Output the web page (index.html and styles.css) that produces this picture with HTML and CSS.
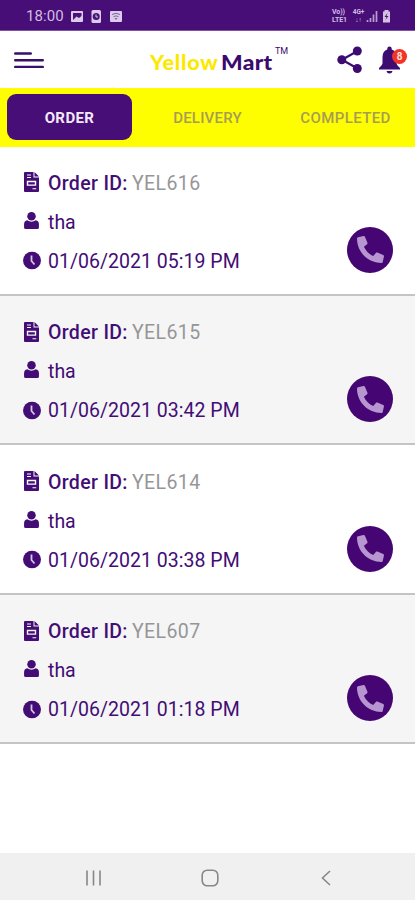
FILE: index.html
```html
<!DOCTYPE html>
<html lang="en">
<head>
<meta charset="utf-8">
<title>Yellow Mart</title>
<link rel="stylesheet" href="styles.css">
</head>
<body>
<svg class="sprite" aria-hidden="true">
  <symbol id="file" viewBox="0 0 15 20">
    <path fill="currentColor" fill-rule="evenodd" d="M1 0H9.500V5.500H15V19Q15 20 14 20H1Q0 20 0 19V1Q0 0 1 0ZM3 2.500V3.500H7V2.500ZM3 5V6H7V5ZM2.800 8.800V13.800H12.200V8.800ZM4.200 10.200H10.800V12.400H4.200ZM8.500 16.300V17.300H12.200V16.300ZM10.500 0L15 4.500H10.500Z"/>
  </symbol>
  <symbol id="person" viewBox="0 0 14 16">
    <circle cx="7" cy="4" r="4" fill="currentColor"/>
    <path fill="currentColor" d="M3 7.800Q7 10.500 11 7.800Q14 8.500 14 11.500V14.500Q14 16 12.500 16H1.500Q0 16 0 14.500V11.500Q0 8.500 3 7.800Z"/>
  </symbol>
  <symbol id="clock" viewBox="0 0 18 18">
    <circle cx="9" cy="9" r="9" fill="currentColor"/>
    <path d="M8.500 4V9.500L11.500 13" fill="none" stroke="#d6c6e3" stroke-width="1.800"/>
  </symbol>
  <symbol id="phone" viewBox="0 0 512 512">
    <path fill="currentColor" d="M493.4 24.6l-104-24c-11.3-2.6-22.9 3.300-27.5 13.900l-48 112c-4.200 9.800-1.400 21.300 6.900 28l60.600 49.600c-36 76.700-98.900 140.500-177.200 177.200l-49.600-60.600c-6.800-8.300-18.200-11.100-28-6.900l-112 48C3.900 366.500-2 378.100.6 389.400l24 104C27.100 504.200 36.700 512 48 512c256.100 0 464-207.500 464-464 0-11.200-7.700-20.900-18.600-23.400z" transform="matrix(-1 0 0 1 512 0)"/>
  </symbol>
</svg>
<div class="app">
  <div class="status">
    <span class="time">18:00</span>
    <svg class="notices" width="53" height="13" viewBox="0 0 53 13">
      <g fill="#dccbea"><rect x="1" y="1" width="12" height="11" rx="1"/><rect x="21.500" y="0" width="9.500" height="13" rx="1.500"/><rect x="40" y="1" width="12" height="11" rx="1"/></g>
      <path d="M3 3H11.500V6L9 8L6.500 6.500L3 10Z" fill="#4a1379"/>
      <circle cx="26.200" cy="6.500" r="3.500" fill="#4a1379"/><path d="M26 4.500V7H28" fill="none" stroke="#dccbea"/>
      <path d="M42 4.500Q46 2 50 4.500M43.500 6.700Q46 5 48.500 6.700" fill="none" stroke="#81619d"/><path d="M44.500 8H47.500L46 10Z" fill="#81619d"/>
    </svg>
    <div class="network"><span>Vo))</span><span>LTE1</span></div>
    <div class="network data"><span>4G+</span><span>↓↑</span></div>
    <svg class="signal" width="25" height="13" viewBox="0 0 25 13">
      <path d="M1.500 12V10M4.500 12V8M7.500 12V4.500M10.500 12V1" stroke="#b79ccc" stroke-width="1.700"/>
      <path d="M17 1.500H18.500V0H22.500V1.500H24V12.500H17Z" fill="#d5c2e3"/><path d="M21.500 3L18.500 7H20.500L19.500 10L22.500 6H20.500Z" fill="#4a1379"/>
    </svg>
  </div>
  <header class="header">
    <svg class="menu" width="30" height="17" viewBox="0 0 30 17"><path d="M1.200 1.500H16.800M1.200 8.200H28.800M1.200 14.900H28.800" stroke="#38106b" stroke-width="2.400" stroke-linecap="round"/></svg>
    <div class="logo"><span class="yellow">Yellow</span><span class="mart">Mart</span><span class="tm">TM</span></div>
    <svg class="share" width="26" height="28" viewBox="0 0 26 28"><path d="M20.500 5L5 13.700L20.500 22.500" fill="none" stroke="#3e0c70" stroke-width="2.200"/><g fill="#3e0c70"><circle cx="20.300" cy="5" r="4.500"/><circle cx="4.800" cy="13.700" r="4.500"/><circle cx="20.300" cy="22.500" r="4.500"/></g></svg>
    <div class="bell"><svg width="23" height="28" viewBox="0 0 23 28"><path fill="#3e0c70" d="M9.300 2.500Q9.300.500 11.500.500T13.700 2.500V3.500Q18.500 5 18.500 11V17Q18.500 19 22 22V23.500H1V22Q4.500 19 4.500 17V11Q4.500 5 9.300 3.500ZM8.500 25H14.500Q14 27.500 11.500 27.500T8.500 25Z"/></svg><span class="badge">8</span></div>
  </header>
  <nav class="tabs"><span class="tab active">ORDER</span><span class="tab">DELIVERY</span><span class="tab completed">COMPLETED</span></nav>
  <main>
    <article class="order">
      <div class="details">
        <div class="line"><svg class="file"><use href="#file"/></svg><b>Order ID:</b><span class="id">YEL616</span></div>
        <div class="line"><svg class="person"><use href="#person"/></svg><span class="name">tha</span></div>
        <div class="line"><svg class="clock"><use href="#clock"/></svg><span class="date">01/06/2021 05:19 PM</span></div>
      </div>
      <div class="call"><svg><use href="#phone"/></svg></div>
    </article>
    <article class="order">
      <div class="details">
        <div class="line"><svg class="file"><use href="#file"/></svg><b>Order ID:</b><span class="id">YEL615</span></div>
        <div class="line"><svg class="person"><use href="#person"/></svg><span class="name">tha</span></div>
        <div class="line"><svg class="clock"><use href="#clock"/></svg><span class="date">01/06/2021 03:42 PM</span></div>
      </div>
      <div class="call"><svg><use href="#phone"/></svg></div>
    </article>
    <article class="order">
      <div class="details">
        <div class="line"><svg class="file"><use href="#file"/></svg><b>Order ID:</b><span class="id">YEL614</span></div>
        <div class="line"><svg class="person"><use href="#person"/></svg><span class="name">tha</span></div>
        <div class="line"><svg class="clock"><use href="#clock"/></svg><span class="date">01/06/2021 03:38 PM</span></div>
      </div>
      <div class="call"><svg><use href="#phone"/></svg></div>
    </article>
    <article class="order">
      <div class="details">
        <div class="line"><svg class="file"><use href="#file"/></svg><b>Order ID:</b><span class="id">YEL607</span></div>
        <div class="line"><svg class="person"><use href="#person"/></svg><span class="name">tha</span></div>
        <div class="line"><svg class="clock"><use href="#clock"/></svg><span class="date">01/06/2021 01:18 PM</span></div>
      </div>
      <div class="call"><svg><use href="#phone"/></svg></div>
    </article>
  </main>
  <footer class="system">
    <svg width="18" height="18" viewBox="0 0 18 18"><path d="M2 1.500V16.500M8.500 1.500V16.500M15 1.500V16.500"/></svg>
    <svg width="18" height="18" viewBox="0 0 18 18"><rect x="1.200" y="1.200" width="15.600" height="15.600" rx="5"/></svg>
    <svg width="18" height="18" viewBox="0 0 18 18"><path d="M13 2L5.500 9L13 16"/></svg>
  </footer>
</div>
</body>
</html>
```
FILE: styles.css
```css
* { box-sizing: border-box; }
body { margin: 0; font-family: Roboto, "Liberation Sans", sans-serif; background: #fff; }
svg { display: block; flex: none; }
.sprite { position: absolute; width: 0; height: 0; }
.app { width: 415px; height: 900px; display: flex; flex-direction: column; overflow: hidden; color: #430d75; }

.status { height: 31px; flex: none; display: flex; align-items: center; padding: 2px 24px 0 26px; background: #470e77; color: #d3bce3; border-bottom: 1px solid #7d53a0; }
.time { width: 44px; font-size: 15px; letter-spacing: 0.1px; }
.network { display: flex; flex-direction: column; margin-left: auto; width: 18px; font-size: 7px; font-weight: 700; line-height: 8px; letter-spacing: -0.1px; white-space: nowrap; }
.network.data { margin-left: 1px; width: 15px; text-align: center; font-size: 6.5px; }

.header { height: 57px; flex: none; display: flex; align-items: center; padding: 1px 7px 0 14px; background: #fff; }
.menu { margin-top: 1px; }
.logo { display: flex; align-items: center; width: 140px; margin: 3px 0 0 106px; font-family: Lato, sans-serif; font-weight: 900; font-size: 20px; line-height: 24px; color: #3b0a6c; }
.yellow { width: 71px; color: #fde900; letter-spacing: 0.7px; transform: scaleX(1.08); transform-origin: left; }
.mart { width: 54px; font-size: 20.5px; letter-spacing: 0.3px; transform: scaleX(1.11); transform-origin: left; }
.tm { align-self: flex-start; margin-top: -3px; font: 400 9px/9px Roboto, sans-serif; }
.share { margin-left: 47px; }
.bell { position: relative; margin-left: 15px; width: 30px; }
.badge { position: absolute; left: 14px; top: 3px; width: 15px; height: 15px; border-radius: 50%; background: #f43328; color: #ffe5dd; font-size: 10px; font-weight: 700; line-height: 15px; text-align: center; }

.tabs { height: 59px; flex: none; display: grid; grid-template-columns: 125px 1fr 125px; column-gap: 13px; padding: 6px 7px 7px; background: #fffe00; box-shadow: 0 1px 1px #d8d7cd; }
.tab { display: flex; align-items: center; justify-content: center; color: #a69d54; font-size: 15px; font-weight: 500; letter-spacing: 0.2px; padding-top: 1px; }
.completed { letter-spacing: 0.4px; }
.tab.active { background: #470e77; color: #f3e8f8; border-radius: 9px; font-weight: 700; letter-spacing: 0.4px; }

.order { height: 149.5px; display: flex; justify-content: space-between; padding: 17.5px 22px 0 24px; background: #fff; border-bottom: 2px solid #c4c4c4; }
.order:first-child { height: 148.5px; padding-top: 16.5px; }
.order:nth-child(even) { background: #f5f5f5; }
.line { height: 39px; display: flex; align-items: center; font-size: 19.5px; white-space: nowrap; }
.line b { width: 84px; margin-left: 9px; font-weight: 500; font-size: 19.5px; letter-spacing: 0.35px; }
.file { width: 15px; height: 20px; transform: translateY(-1px); }
.person { width: 15px; height: 17px; transform: translateY(-2px); }
.clock { width: 18px; height: 18px; margin-left: -1px; transform: translateY(-0.5px); }
.id { color: #969698; letter-spacing: 0.4px; }
.name { margin-left: 9px; }
.date { margin-left: 7px; letter-spacing: 0.02px; }
.call { width: 46px; height: 46px; margin-top: 63px; border-radius: 50%; background: #450673; display: flex; align-items: center; justify-content: center; color: #b795d1; }
.call svg { width: 27px; height: 27px; }

.system { height: 47px; flex: none; margin-top: auto; display: flex; justify-content: space-between; align-items: center; padding: 2px 80px 0 85px; background: #f0f0f0; }
.system svg { fill: none; stroke: #888; stroke-width: 1.6; }
```
